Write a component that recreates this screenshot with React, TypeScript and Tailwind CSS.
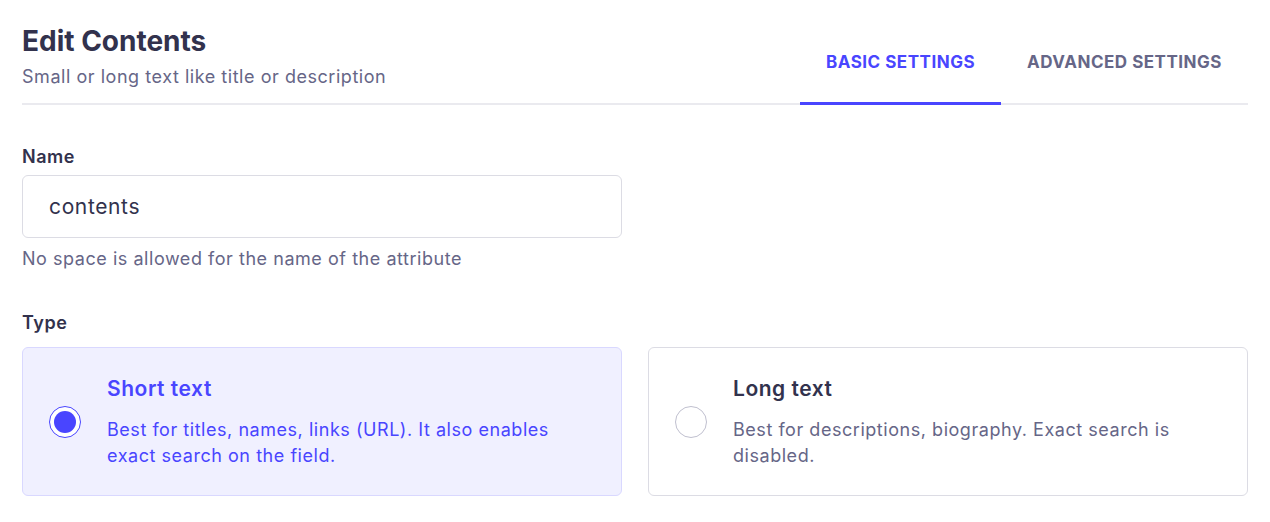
import { useState } from "react";

const tabs = ["Basic settings", "Advanced settings"];

const types = [
  {
    id: "short",
    title: "Short text",
    description: "Best for titles, names, links (URL). It also enables exact search on the field.",
  },
  {
    id: "long",
    title: "Long text",
    description: "Best for descriptions, biography. Exact search is disabled.",
  },
];

function Radio({ checked }: { checked: boolean }) {
  if (checked) {
    return (
      <span className="grid size-[32px] shrink-0 place-items-center rounded-full border-[1.5px] border-[#4945ff] bg-white">
        <span className="size-[22px] rounded-full bg-[#4945ff]" />
      </span>
    );
  }
  return <span className="size-[32px] shrink-0 rounded-full border border-[#c0c0cf] bg-white" />;
}

export default function App() {
  const [activeTab, setActiveTab] = useState(0);
  const [type, setType] = useState("short");
  const [name, setName] = useState("contents");

  return (
    <div className="min-h-screen bg-white px-[22px] pt-[22px] font-['Inter',sans-serif] text-[#32324d]">
      <header className="flex items-end justify-between border-b-2 border-[#eaeaef]">
        <div className="pb-[13px]">
          <h1 className="text-[28px] font-bold leading-[38px]">Edit Contents</h1>
          <p className="mt-[4px] text-[18px] leading-[26px] tracking-[0.03em] text-[#666687]">
            Small or long text like title or description
          </p>
        </div>
        <nav className="-mb-[2px] flex">
          {tabs.map((tab, i) => (
            <button
              key={tab}
              type="button"
              onClick={() => setActiveTab(i)}
              className={`border-b-[3px] px-[26px] pb-[29px] pt-[4px] text-[17px] font-bold uppercase leading-[22px] tracking-[0.03em] ${
                activeTab === i ? "border-[#4945ff] text-[#4945ff]" : "border-transparent text-[#666687]"
              }`}
            >
              {tab}
            </button>
          ))}
        </nav>
      </header>

      <section className="pt-[39px]">
        <label htmlFor="name" className="block text-[18px] font-semibold leading-[26px] tracking-[0.03em]">
          Name
        </label>
        <input
          id="name"
          value={name}
          onChange={(e) => setName(e.target.value)}
          className="mt-[5px] block h-[63px] w-[600px] rounded-[6px] border border-[#dcdce4] px-[26px] text-[21px] tracking-[0.03em] text-[#32324d] outline-none"
        />
        <p className="mt-[8px] text-[18px] leading-[26px] tracking-[0.03em] text-[#666687]">
          No space is allowed for the name of the attribute
        </p>
      </section>

      <section className="pt-[38px]">
        <p className="text-[18px] font-semibold leading-[26px] tracking-[0.03em]">Type</p>
        <div className="mt-[11px] grid grid-cols-2 gap-[26px]">
          {types.map((t) => {
            const checked = type === t.id;
            return (
              <button
                key={t.id}
                type="button"
                onClick={() => setType(t.id)}
                className={`flex h-[149px] items-center gap-[26px] rounded-[6px] border px-[26px] text-left ${
                  checked ? "border-[#d9d8ff] bg-[#f0f0ff]" : "border-[#dcdce4] bg-white"
                }`}
              >
                <Radio checked={checked} />
                <div className="pr-[40px]">
                  <p
                    className={`text-[21px] font-semibold leading-[28px] tracking-[0.025em] ${
                      checked ? "text-[#4945ff]" : "text-[#32324d]"
                    }`}
                  >
                    {t.title}
                  </p>
                  <p
                    className={`mt-[14px] text-[18px] leading-[26px] tracking-[0.03em] ${
                      checked ? "text-[#4945ff]" : "text-[#666687]"
                    }`}
                  >
                    {t.description}
                  </p>
                </div>
              </button>
            );
          })}
        </div>
      </section>
    </div>
  );
}
